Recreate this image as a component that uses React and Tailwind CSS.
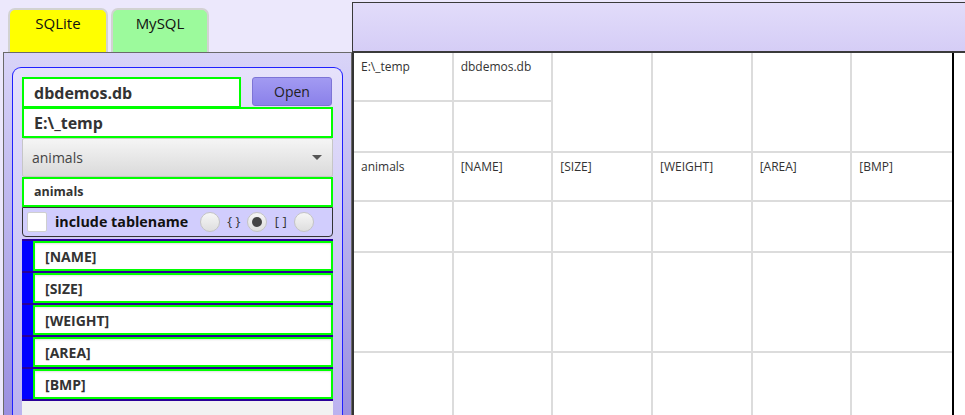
import React from "react";

const font = { fontFamily: '"Open Sans", "Noto Sans", sans-serif' };

function GreenInput({ children, className = "" }) {
  return (
    <div
      className={
        "flex items-center bg-white border-2 border-[#00ff00] pl-[10px] font-bold text-[#333] " +
        className
      }
    >
      {children}
    </div>
  );
}

function Radio({ checked }) {
  return (
    <div className="w-[20px] h-[20px] rounded-full border border-[#c4c4c4] bg-gradient-to-b from-[#f6f6f6] to-[#dedede] flex items-center justify-center shrink-0">
      {checked && <div className="w-[10px] h-[10px] rounded-full bg-[#444]" />}
    </div>
  );
}

function ListItem({ label }) {
  return (
    <div className="flex h-[32px] border-b-2 border-[#2a0099] shrink-0">
      <div className="w-[11px] bg-[#0000ff]" />
      <div className="flex-1 flex items-center bg-white border-2 border-[#00ff00] pl-[10px] font-bold text-[14px] text-[#333] shadow-[inset_0_1px_2px_rgba(0,0,0,0.12)]">
        {label}
      </div>
    </div>
  );
}

function Cell({ top, bottom, split = true, last = false }) {
  return (
    <div
      className={
        "h-[100px] flex flex-col border-b-2 " +
        (last ? "border-[#dcdcdc]" : "border-r-2 border-[#dcdcdc]")
      }
    >
      {split ? (
        <>
          <div className="h-[49px] border-b-2 border-[#dcdcdc] px-[7px] pt-[5px] text-[12px] text-[#333]">
            {top}
          </div>
          <div className="flex-1 px-[7px] pt-[5px] text-[12px] text-[#333]">{bottom}</div>
        </>
      ) : (
        <div className="flex-1 px-[7px] pt-[5px] text-[12px] text-[#333]">{top}</div>
      )}
    </div>
  );
}

export default function App() {
  const row2 = ["animals", "[NAME]", "[SIZE]", "[WEIGHT]", "[AREA]", "[BMP]"];
  return (
    <div
      className="w-[965px] h-[415px] flex bg-[#ece8fc] overflow-hidden"
      style={font}
    >
      {/* Left column */}
      <div className="w-[352px] flex flex-col shrink-0">
        {/* tabs */}
        <div className="h-[52px] flex items-end pl-[8px] gap-[3px] shrink-0">
          <div className="w-[100px] h-[44px] rounded-t-[7px] border-2 border-b-0 border-[#d2d2d2] bg-[#ffff00] flex justify-center pt-[2px] text-[15px] text-[#111]">
            SQLite
          </div>
          <div className="w-[98px] h-[44px] rounded-t-[7px] border-2 border-b-0 border-[#d2d2d2] bg-[#9cfa9c] flex justify-center pt-[2px] text-[15px] text-[#111]">
            MySQL
          </div>
        </div>
        {/* outer panel */}
        <div className="flex-1 min-h-0 ml-[3px] border-l border-t border-r border-[#6a6a6a] bg-gradient-to-b from-[#d9d4f8] to-[#9a8fe0] pt-[14px] pl-[8px] pr-[8px] flex flex-col">
          <div className="flex-1 min-h-0 rounded-t-[9px] border border-b-0 border-[#2020ff] bg-gradient-to-b from-[#e6e2fb] to-[#bbb2ef] pt-[9px] px-[9px] flex flex-col">
            <div className="flex items-start gap-[11px] shrink-0">
              <GreenInput className="w-[219px] h-[31px] text-[16px]">dbdemos.db</GreenInput>
              <div className="w-[80px] h-[29px] rounded-[3px] border border-[#7d74d6] bg-gradient-to-b from-[#a29af2] to-[#8b81ea] flex items-center justify-center text-[14px] text-[#222]">
                Open
              </div>
            </div>
            <GreenInput className="h-[31px] -mt-[1px] text-[16px] shrink-0">E:\_temp</GreenInput>
            <div className="h-[39px] shrink-0 border border-[#c6c6c6] rounded-[2px] bg-gradient-to-b from-[#f5f5f5] to-[#dadada] flex items-center justify-between pl-[9px] pr-[10px] text-[14px] text-[#444]">
              <span>animals</span>
              <svg width="10" height="5" viewBox="0 0 10 5">
                <path d="M0 0 L10 0 L5 5 Z" fill="#555" />
              </svg>
            </div>
            <GreenInput className="h-[30px] text-[12.5px] shrink-0">animals</GreenInput>
            <div className="h-[30px] shrink-0 bg-[#d1cdfd] border border-[#333] rounded-b-[4px] flex items-center pl-[4px] text-[#111]">
              <div className="w-[20px] h-[20px] bg-white border border-[#cfcfcf] rounded-[2px] shrink-0" />
              <span className="ml-[8px] font-bold text-[14.3px]">include tablename</span>
              <div className="ml-[12px] flex items-center">
                <Radio />
                <span className="w-[27px] text-center text-[13px] text-[#333]">{"{ }"}</span>
                <Radio checked />
                <span className="w-[27px] text-center text-[13px] text-[#333]">[ ]</span>
                <Radio />
              </div>
            </div>
            <div className="mt-[2px] flex-1 min-h-0 bg-[#f2f2f2] flex flex-col">
              <div className="h-[2px] bg-[#2a0099] shrink-0" />
              {["[NAME]", "[SIZE]", "[WEIGHT]", "[AREA]", "[BMP]"].map((l) => (
                <ListItem key={l} label={l} />
              ))}
            </div>
          </div>
        </div>
      </div>

      {/* Right side */}
      <div className="flex-1 flex flex-col min-w-0">
        <div className="h-[51px] shrink-0 mt-[2px] border-l border-t border-b-2 border-[#3a3a3a] bg-gradient-to-b from-[#e2dcfa] to-[#d5cdf6]" />
        <div className="flex-1 min-h-0 overflow-hidden bg-white flex border-l-2 border-[#333]">
          <div className="w-[600px] shrink-0 flex flex-col border-r-2 border-black">
            <div className="grid grid-cols-6">
              <Cell top="E:\_temp" />
              <Cell top="dbdemos.db" />
              <Cell split={false} />
              <Cell split={false} />
              <Cell split={false} />
              <Cell split={false} last />
              {row2.map((t, i) => (
                <Cell key={t} top={t} last={i === 5} />
              ))}
              {row2.map((t, i) => (
                <Cell key={"e" + t} split={false} last={i === 5} />
              ))}
              {row2.map((t, i) => (
                <Cell key={"f" + t} split={false} last={i === 5} />
              ))}
            </div>
          </div>
          <div className="flex-1" />
        </div>
      </div>
    </div>
  );
}
